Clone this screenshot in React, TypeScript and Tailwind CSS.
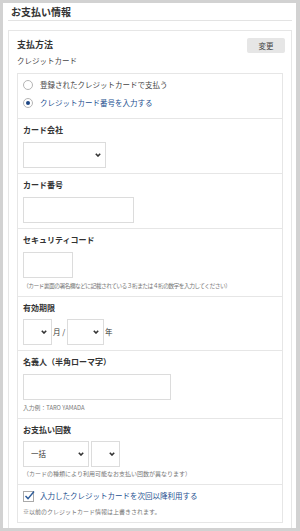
import React from 'react';

const font = { fontFamily: '"Noto Sans CJK JP", "Noto Sans", sans-serif' };

const Chevron: React.FC = () => (
  <svg width="6" height="4" viewBox="0 0 6 4" className="shrink-0">
    <path d="M0.8 0.8 L3 3 L5.2 0.8" fill="none" stroke="#333" strokeWidth="1.6" />
  </svg>
);

const SelectBox: React.FC<{ w: string; label?: string }> = ({ w, label }) => (
  <div className={`${w} h-[26px] border border-[#dcdcdc] bg-white flex items-center justify-between pl-[7px] pr-[4px]`}>
    <span className="text-[7.5px] text-[#333]">{label}</span>
    <Chevron />
  </div>
);

const Label: React.FC<{ children: React.ReactNode }> = ({ children }) => (
  <div className="h-[12px] leading-[12px] text-[8px] font-bold text-[#333]">{children}</div>
);

const Note: React.FC<{ children: React.ReactNode; className?: string }> = ({ children, className }) => (
  <div className={`h-[8px] leading-[8px] text-[#777] whitespace-nowrap ${className || ''}`}>{children}</div>
);

const Radio: React.FC<{ checked?: boolean; children: React.ReactNode }> = ({ checked, children }) => (
  <div className="h-[18px] flex items-center">
    <div className="w-[10px] h-[10px] rounded-full border border-[#b5b5b5] bg-white flex items-center justify-center">
      {checked && <div className="w-[4px] h-[4px] rounded-full bg-[#1d4685]" />}
    </div>
    <span className={`ml-[7px] text-[7.5px] ${checked ? 'text-[#24508f]' : 'text-[#444]'}`}>{children}</span>
  </div>
);

const App: React.FC = () => {
  return (
    <div style={font} className="w-[300px] h-[531px] overflow-hidden bg-white border-t-[3px] border-l-[3px] border-b-[3px] border-r-[4px] border-[#d2d2d2] pl-[5px] pr-[4px]">
      <div className="h-[18px] leading-[18px] pl-[3px] border-b border-[#e3e3e3] text-[10px] font-bold text-[#333]">お支払い情報</div>

      <div className="mt-[9px] border border-[#e6e6e6] px-[8px] pt-[7px] pb-[8px]">
        <div className="flex items-start justify-between">
          <div className="h-[13px] leading-[13px] text-[9px] font-bold text-[#333]">支払方法</div>
          <button className="w-[38px] h-[15px] rounded-[2px] bg-[#e6e6e6] text-[7.5px] text-[#444] leading-[15px] mr-[-2px]">変更</button>
        </div>
        <div className="mt-[3px] h-[10px] leading-[10px] text-[7.5px] text-[#444]">クレジットカード</div>

        <div className="mt-[7px] border border-[#e6e6e6]">
          <div className="pt-[2px] pb-[6px] pl-[5px]">
            <Radio>登録されたクレジットカードで支払う</Radio>
            <Radio checked>クレジットカード番号を入力する</Radio>
          </div>

          <div className="border-t border-[#e6e6e6] px-[5px] pt-[5px] pb-[5px]">
            <Label>カード会社</Label>
            <div className="mt-[6px]"><SelectBox w="w-[83px]" /></div>
          </div>

          <div className="border-t border-[#e6e6e6] px-[5px] pt-[5px] pb-[5px]">
            <Label>カード番号</Label>
            <input className="mt-[6px] block w-[111px] h-[26px] border border-[#dcdcdc] outline-none" />
          </div>

          <div className="border-t border-[#e6e6e6] px-[5px] pt-[5px] pb-[6px]">
            <Label>セキュリティコード</Label>
            <input className="mt-[6px] block w-[50px] h-[26px] border border-[#dcdcdc] outline-none" />
            <Note className="mt-[4px] text-[5.8px] tracking-[-0.6px]">（カード裏面の署名欄などに記載されている３桁または４桁の数字を入力してください）</Note>
          </div>

          <div className="border-t border-[#e6e6e6] px-[5px] pt-[5px] pb-[5px]">
            <Label>有効期限</Label>
            <div className="mt-[5px] flex items-center text-[7.5px] text-[#333]">
              <SelectBox w="w-[29px]" />
              <span className="ml-[1px] w-[14px]">月 /</span>
              <SelectBox w="w-[37px]" />
              <span className="ml-[1px]">年</span>
            </div>
          </div>

          <div className="border-t border-[#e6e6e6] px-[5px] pt-[5px] pb-[6px]">
            <Label>名義人（半角ローマ字）</Label>
            <input className="mt-[6px] block w-[148px] h-[26px] border border-[#dcdcdc] outline-none" />
            <Note className="mt-[4px] text-[5.8px] text-[#666]">入力例：TARO YAMADA</Note>
          </div>

          <div className="border-t border-[#e6e6e6] px-[5px] pt-[5px] pb-[6px]">
            <Label>お支払い回数</Label>
            <div className="mt-[5px] flex gap-[2px]">
              <SelectBox w="w-[66px]" label="一括" />
              <SelectBox w="w-[29px]" />
            </div>
            <Note className="mt-[3px] text-[6px]">（カードの種類により利用可能なお支払い回数が異なります）</Note>
          </div>

          <div className="border-t border-[#e6e6e6] px-[5px] pt-[4px] pb-[6px]">
            <div className="h-[14px] flex items-center">
              <svg width="12" height="12" viewBox="0 0 12 12" className="shrink-0">
                <rect x="0.5" y="1.5" width="10" height="10" fill="white" stroke="#aaa" strokeWidth="1" />
                <path d="M2.5 6 L5 8.6 L11 1.5" fill="none" stroke="#2f5d9b" strokeWidth="1.4" />
              </svg>
              <span className="ml-[5px] text-[7.5px] text-[#24508f]">入力したクレジットカードを次回以降利用する</span>
            </div>
            <Note className="mt-[5px] text-[6px]">※以前のクレジットカード情報は上書きされます。</Note>
          </div>
        </div>
      </div>
    </div>
  );
};

export default App;
